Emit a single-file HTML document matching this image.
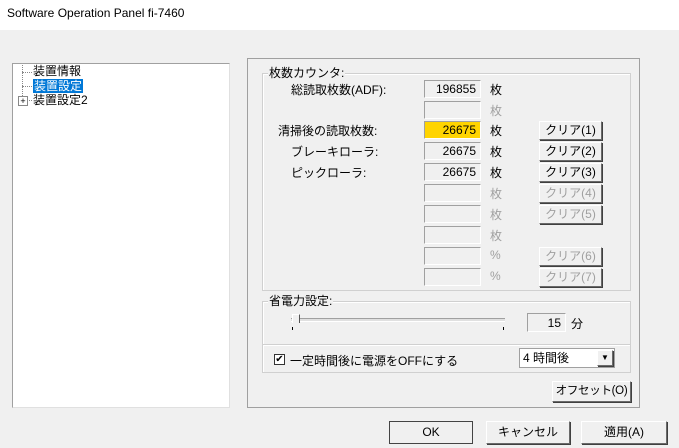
<!DOCTYPE html><html><head><meta charset="utf-8"><style>
body{margin:0;width:679px;height:448px;background:#f0f0f0;position:relative;overflow:hidden;font-family:"Liberation Sans","Noto Sans CJK JP",sans-serif;font-size:12px;color:#000}
.a{position:absolute;white-space:nowrap}
.title{left:0;top:0;width:679px;height:30px;background:#fff}
.tb{position:absolute;width:57px;height:18px;background:#f0f0f0;border-top:1px solid #a0a0a0;border-left:1px solid #a0a0a0;border-right:1px solid #fff;border-bottom:1px solid #fff;text-align:right;box-sizing:border-box;padding-right:4px;line-height:17px}
.btn{position:absolute;white-space:nowrap;background:#f0f0f0;border:1px solid #fff;border-right-color:#6a6a6a;border-bottom-color:#6a6a6a;box-shadow:1px 1px 0 #404040;box-sizing:border-box;text-align:center}
.dis{color:#a0a0a0}
.grp{position:absolute;border:1px solid #d0d0d0;box-shadow:inset 1px 1px 0 #fff}
.lg{position:absolute;white-space:nowrap;background:#f0f0f0;padding:0 1px;line-height:14px}
</style></head><body>
<div class="a title"></div>
<div class="a" style="left:7px;top:6px;font-size:12px">Software Operation Panel fi-7460</div>
<div class="a" style="left:12px;top:63px;width:218px;height:345px;background:#fff;border:1px solid #a0a0a0;border-right-color:#e0e0e0;border-bottom-color:#e0e0e0;box-sizing:border-box"></div>
<div class="a" style="left:22px;top:65px;width:9px;height:37px;border-left:1px dotted #888"></div>
<div class="a" style="left:22px;top:72px;width:10px;border-top:1px dotted #888"></div>
<div class="a" style="left:22px;top:86px;width:10px;border-top:1px dotted #888"></div>
<div class="a" style="left:26px;top:100px;width:6px;border-top:1px dotted #888"></div>
<div class="a" style="left:18px;top:96px;width:8px;height:8px;border:1px solid #888;background:#fff;font-size:9px;line-height:8px;text-align:center">+</div>
<div class="a" style="left:33px;top:64px;line-height:15px">装置情報</div>
<div class="a" style="left:33px;top:79px;line-height:14px;background:#0078d7;color:#fff;padding:0 1px">装置設定</div>
<div class="a" style="left:33px;top:93px;line-height:15px">装置設定2</div>
<div class="a" style="left:247px;top:58px;width:393px;height:350px;border:1px solid #a0a0a0;box-sizing:border-box"></div>
<div class="grp" style="left:262px;top:73px;width:367px;height:216px"></div>
<div class="lg" style="left:268px;top:66px">枚数カウンタ:</div>
<div class="a" style="left:291px;top:81px">総読取枚数(ADF):</div>
<div class="a" style="left:278px;top:122px">清掃後の読取枚数:</div>
<div class="a" style="left:291px;top:143px">ブレーキローラ:</div>
<div class="a" style="left:291px;top:164px">ピックローラ:</div>
<div class="tb" style="left:424px;top:80px">196855</div>
<div class="tb" style="left:424px;top:101px"></div>
<div class="tb" style="left:424px;top:121px;background:#ffd400">26675</div>
<div class="tb" style="left:424px;top:142px">26675</div>
<div class="tb" style="left:424px;top:163px">26675</div>
<div class="tb" style="left:424px;top:184px"></div>
<div class="tb" style="left:424px;top:205px"></div>
<div class="tb" style="left:424px;top:226px"></div>
<div class="tb" style="left:424px;top:247px"></div>
<div class="tb" style="left:424px;top:268px"></div>
<div class="a" style="left:490px;top:81px">枚</div>
<div class="a dis" style="left:490px;top:102px">枚</div>
<div class="a" style="left:490px;top:122px">枚</div>
<div class="a" style="left:490px;top:143px">枚</div>
<div class="a" style="left:490px;top:164px">枚</div>
<div class="a dis" style="left:490px;top:185px">枚</div>
<div class="a dis" style="left:490px;top:206px">枚</div>
<div class="a dis" style="left:490px;top:227px">枚</div>
<div class="a dis" style="left:490px;top:248px">%</div>
<div class="a dis" style="left:490px;top:269px">%</div>
<div class="btn" style="left:539px;top:121px;width:63px;height:19px;line-height:17px">クリア(1)</div>
<div class="btn" style="left:539px;top:142px;width:63px;height:19px;line-height:17px">クリア(2)</div>
<div class="btn" style="left:539px;top:163px;width:63px;height:19px;line-height:17px">クリア(3)</div>
<div class="btn dis" style="left:539px;top:184px;width:63px;height:19px;line-height:17px">クリア(4)</div>
<div class="btn dis" style="left:539px;top:205px;width:63px;height:19px;line-height:17px">クリア(5)</div>
<div class="btn dis" style="left:539px;top:247px;width:63px;height:19px;line-height:17px">クリア(6)</div>
<div class="btn dis" style="left:539px;top:268px;width:63px;height:19px;line-height:17px">クリア(7)</div>
<div class="grp" style="left:262px;top:301px;width:367px;height:43px"></div>
<div class="grp" style="left:262px;top:344px;width:367px;height:27px"></div>
<div class="lg" style="left:268px;top:294px">省電力設定:</div>
<div class="a" style="left:291px;top:318px;width:214px;height:2px;border-top:1px solid #a0a0a0;border-bottom:1px solid #fff;background:#e0e0e0"></div>
<div class="a" style="left:292px;top:314px;width:6px;height:8px;border-left:1px solid #fff;border-right:1px solid #555;border-top:1px solid #fff;background:#f0f0f0"></div>
<div class="a" style="left:292px;top:327px;width:1px;height:3px;background:#000"></div>
<div class="a" style="left:503px;top:327px;width:1px;height:3px;background:#000"></div>
<div class="tb" style="left:527px;top:313px;width:39px;height:19px;line-height:18px">15</div>
<div class="a" style="left:571px;top:315px">分</div>
<div class="a" style="left:274px;top:354px;width:11px;height:11px;border:1px solid #333;background:#fff;box-sizing:border-box;font-size:10px;line-height:9px;text-align:center">✔</div>
<div class="a" style="left:290px;top:352px">一定時間後に電源をOFFにする</div>
<div class="a" style="left:519px;top:348px;width:96px;height:20px;background:#fff;border:1px solid #a0a0a0;box-sizing:border-box;line-height:18px;padding-left:3px">4 時間後</div>
<div class="btn" style="left:597px;top:350px;width:16px;height:16px;font-size:8px;line-height:14px">▼</div>
<div class="btn" style="left:552px;top:381px;width:79px;height:21px;line-height:19px;font-size:11.5px;letter-spacing:-0.3px">オフセット(O)</div>
<div class="btn" style="left:389px;top:421px;width:84px;height:23px;line-height:21px;border:1px solid #0078d7;box-shadow:none;outline:1px solid #444;outline-offset:-1px">OK</div>
<div class="btn" style="left:486px;top:421px;width:84px;height:23px;line-height:21px">キャンセル</div>
<div class="btn" style="left:581px;top:421px;width:86px;height:23px;line-height:21px">適用(A)</div>
</body></html>
